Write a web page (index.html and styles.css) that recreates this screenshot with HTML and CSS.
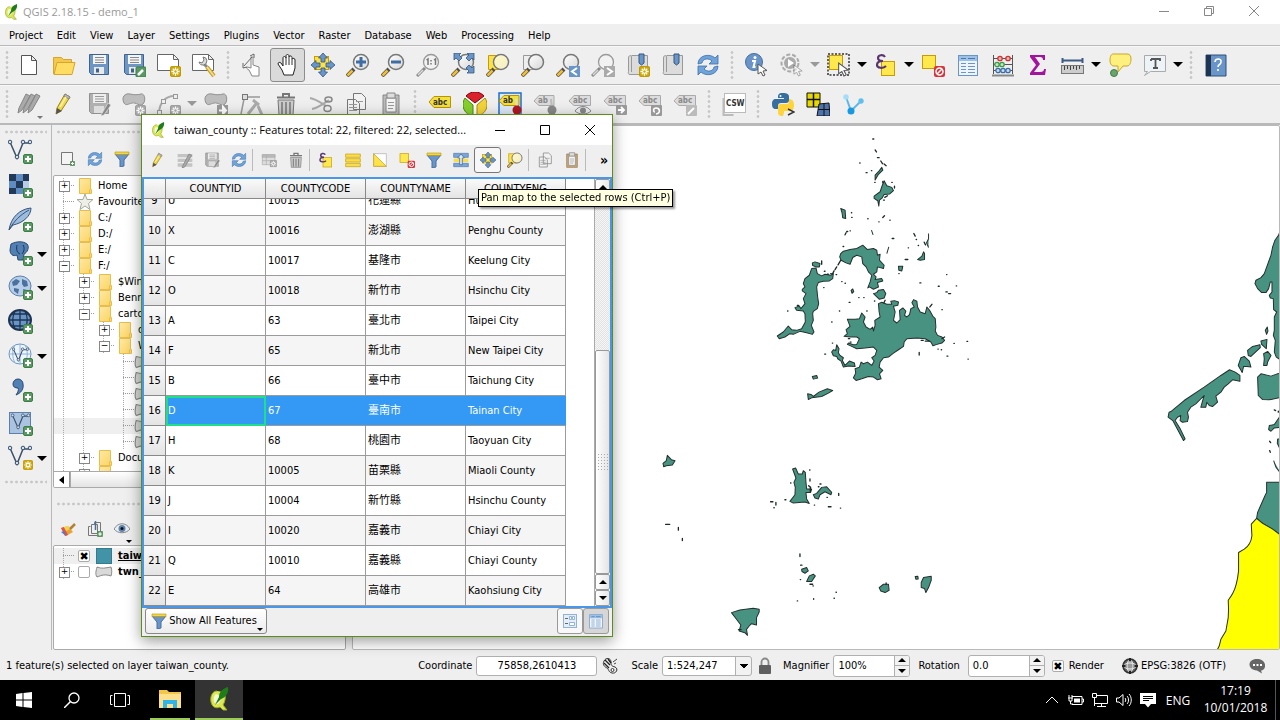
FILE: index.html
```html
<!DOCTYPE html>
<html lang="en">
<head>
<meta charset="utf-8">
<title>QGIS 2.18.15 - demo_1</title>
<link rel="stylesheet" href="styles.css">
</head>
<body>
<svg class="sprite" aria-hidden="true">
  <defs>
    <linearGradient id="gFold" x1="0" y1="0" x2="1" y2="1"><stop offset="0" stop-color="#ffe9a6"/><stop offset="1" stop-color="#fbd35e"/></linearGradient>
    <linearGradient id="gLens" x1="0" y1="0" x2="1" y2="1"><stop offset="0" stop-color="#fff"/><stop offset="1" stop-color="#d5d7d5"/></linearGradient>
  </defs>
  <symbol id="leaf" viewBox="0 0 24 24"><path d="M10 4C5 4 3 10 4 15c1 5 5 7 9 5l3 3h4l-4-5c3-5 3-11 0-13" fill="#dbe84f" stroke="#98a72e"/><path d="M9 7c-3 2-3 9 0 10s5-3 5-8" fill="#f6f9d8"/><path d="M21 0c-6 2-9 5-9 10l-4 8 6-6c5-2 8-6 7-12z" fill="#1e7d18"/></symbol>
  <symbol id="plus" viewBox="0 0 10 10"><rect x=".5" y=".5" width="9" height="9" rx="1.5" fill="#5a9a62" stroke="#3f7d48"/><path d="M5 2v6M2 5h6" stroke="#fff" stroke-width="2"/></symbol>
  <symbol id="gearY" viewBox="0 0 12 12"><rect x=".5" y=".5" width="11" height="11" rx="1.5" fill="#cfa800" stroke="#b89400"/><path d="M6 1.5v9M1.5 6h9M3 3l6 6M9 3L3 9" stroke="#fff" stroke-width="1.4"/><circle cx="6" cy="6" r="1.3" fill="#cfa800"/></symbol>
  <symbol id="gearG" viewBox="0 0 12 12"><rect x=".5" y=".5" width="11" height="11" rx="1.5" fill="#aaa" stroke="#999"/><path d="M6 1.5v9M1.5 6h9M3 3l6 6M9 3L3 9" stroke="#fff" stroke-width="1.4"/><circle cx="6" cy="6" r="1.3" fill="#aaa"/></symbol>
  <symbol id="cursor" viewBox="0 0 12 14"><path d="M1 1v10l3-2 2 4 2-1-2-4 4-.5z" fill="#fff" stroke="#555"/></symbol>
  <symbol id="new" viewBox="0 0 24 24"><path d="M4.500 2.500h10l5 5v14h-15zM14.500 2.500v5h5" fill="#fff" stroke="#555"/></symbol>
  <symbol id="open" viewBox="0 0 24 24"><path d="M1.500 21V4.500h8l2 2h8v4" fill="#f4c84c" stroke="#d7a52d"/><path d="M2 21.500l3-12h18l-3 12z" fill="#ffdc62" stroke="#d7a52d"/></symbol>
  <symbol id="save" viewBox="0 0 24 24"><path d="M2.500 1.500h19v20h-17l-2-2z" fill="#6d96c4" stroke="#3f638e"/><path d="M6 2h13v9H6z" fill="#f4f4f4"/><path d="M8 4.500h9M8 7h9M8 9.500h9" stroke="#888"/><path d="M7 14h10v7H7z" fill="#e9e9e9"/><path d="M9 15.500h3v4H9z" fill="#3f638e"/></symbol>
  <symbol id="saveas" viewBox="0 0 24 24"><use href="#save"/><rect x="14" y="14" width="10" height="10" rx="1" fill="#5a9a62" stroke="#3f7d48"/><path d="M16 22l5-5" stroke="#fff" stroke-width="2.500"/></symbol>
  <symbol id="saveg" viewBox="0 0 24 24"><path d="M2.500 1.500h19v20h-17l-2-2z" fill="#b0b0b0" stroke="#909090"/><path d="M6 2h13v9H6z" fill="#eee"/><path d="M8 4.500h9M8 7h9M8 9.500h9" stroke="#999"/><path d="M7 14h10v7H7z" fill="#ddd"/><path d="M14 23l7-12 3 2-7 10-3 1z" fill="#888" stroke="#efefef" stroke-width=".6"/></symbol>
  <symbol id="composer" viewBox="0 0 24 24"><path d="M.500 1.500h16l5 5v11h-21zM16.500 1.500v5h5" fill="#fff" stroke="#666"/><use href="#gearY" x="13" y="13" width="11" height="11"/></symbol>
  <symbol id="manager" viewBox="0 0 24 24"><path d="M.500 1.500h16l5 5v11h-21zM16.500 1.500v5h5" fill="#fff" stroke="#666"/><path d="M12 11l3 3" stroke="#888" stroke-width="3"/><path d="M7 9a4 4 0 1 0 4-5l1 3-2 3z" fill="#ddd" stroke="#777"/><path d="M15 14l7 9" stroke="#c49b22" stroke-width="4"/><path d="M15 14l7 9" stroke="#f3dc83" stroke-width="2"/></symbol>
  <symbol id="touch" viewBox="0 0 24 24"><path d="M10 4v11l-4-1c-1 1 0 2 2 3l3 6h7V14l-6-2 0-8z" fill="#fff" stroke="#888"/><path d="M3 13l8-9M9 3l4-2v4M2 10v5l4-1" fill="none" stroke="#666"/></symbol>
  <symbol id="hand" viewBox="0 0 24 24"><path d="M8 22l-2-5-4-6c0-2 2-2 3-1l2 3V5c0-2 2.500-2 3 0V3c0-2 3-2 3 0v1c0-1.500 3-1.500 3 .5V6c1-1 3-1 3 1v8l-2 7z" fill="#fff" stroke="#222"/><path d="M10 4.500V12M13 4v8M16 6v6" stroke="#333"/></symbol>
  <symbol id="pansel" viewBox="0 0 24 24"><rect x="3.500" y="3.500" width="14" height="13" fill="#fbe24a" stroke="#c79c00"/><path d="M12 0l4.500 5H14v4h-4V5H7.500zM12 24l4.500-5H14v-4h-4v4H7.500zM0 12l5-4.500V10h4v4H5v2.500zM24 12l-5-4.500V10h-4v4h4v2.500z" fill="#6a95c8" stroke="#34567e" stroke-width=".8"/></symbol>
  <symbol id="mag" viewBox="0 0 24 24"><path d="M1 23l7-7" stroke="#4d4d4d" stroke-width="4"/><path d="M1.500 22.500l5-5" stroke="#f2bd2e" stroke-width="2.500"/><circle cx="15" cy="9" r="7.500" fill="url(#gLens)" stroke="#777" stroke-width="1.500"/></symbol>
  <symbol id="magg" viewBox="0 0 24 24"><path d="M1 23l8-8" stroke="#888" stroke-width="3"/><path d="M2 22l5-5" stroke="#ddd" stroke-width="1.500"/><circle cx="15" cy="9" r="7.500" fill="#f2f2f2" stroke="#999" stroke-width="1.300"/></symbol>
  <symbol id="zin" viewBox="0 0 24 24"><use href="#mag"/><path d="M15 4v10M10 9h10" stroke="#3f6ca3" stroke-width="3"/></symbol>
  <symbol id="zout" viewBox="0 0 24 24"><use href="#mag"/><path d="M10 9h10" stroke="#3f6ca3" stroke-width="3"/></symbol>
  <symbol id="z11" viewBox="0 0 24 24"><use href="#magg"/><path d="M10.500 7l1.500-1v6M18 7l1.500-1v6M15 7v1.500M15 10v1.500" fill="none" stroke="#777" stroke-width="1.500"/></symbol>
  <symbol id="zfull" viewBox="0 0 24 24"><use href="#mag"/><path d="M3 0h7L8 2l3 3-3 3-3-3-2 2zM23 0v7l-2-2-3 3-3-3 3-3-2-2zM23 20h-7l2-2-3-3 3-3 3 3 2-2z" fill="#6a95c8" stroke="#34567e" stroke-width=".8"/></symbol>
  <symbol id="zsel" viewBox="0 0 24 24"><path d="M2.500 2.500h13v14h-13z" fill="#fbe24a" stroke="#c79c00"/><use href="#mag"/><circle cx="15" cy="9" r="6.500" fill="#fdf5b8" opacity=".75"/></symbol>
  <symbol id="zlay" viewBox="0 0 24 24"><path d="M2.500 2.500h13v14h-13z" fill="#eee" stroke="#999"/><use href="#mag"/></symbol>
  <symbol id="zlast" viewBox="0 0 24 24"><use href="#mag"/><rect x="13" y="13" width="11" height="11" fill="#6a95c8"/><path d="M21 15l-5 3.500 5 3.500" fill="none" stroke="#fff" stroke-width="2"/></symbol>
  <symbol id="znext" viewBox="0 0 24 24"><use href="#magg"/><rect x="13" y="13" width="11" height="11" fill="#aaa"/><path d="M16 15l5 3.500-5 3.500" fill="none" stroke="#fff" stroke-width="2"/></symbol>
  <symbol id="book" viewBox="0 0 24 24"><path d="M2.500 5c0-3 3-3 3-1v15M5.500 2.500h16v19H4c-2 0-2-2-1.500-3V5" fill="#dcdcdc" stroke="#999"/><path d="M13 1h5v9l-2.500 2L13 10z" fill="#6a95c8" stroke="#34567e"/></symbol>
  <symbol id="booknew" viewBox="0 0 24 24"><use href="#book"/><use href="#gearY" x="13" y="13" width="11" height="11"/></symbol>
  <symbol id="sync" viewBox="0 0 24 24"><path d="M2 11C2 2 14 0 19 5l3-3v9h-9l3-3C13 5 7 5 6 10zM22 13c0 9-12 11-17 6l-3 3v-9h9l-3 3c3 3 9 3 10-2z" fill="#6fa3da" stroke="#3c6fa8" stroke-width=".8"/></symbol>
  <symbol id="info" viewBox="0 0 24 24"><circle cx="9" cy="9" r="8.500" fill="#6a93c7" stroke="#46709f"/><circle cx="10" cy="4.500" r="1.500" fill="#fff"/><path d="M7 8h3l-1.500 6h2" fill="none" stroke="#fff" stroke-width="2"/><use href="#cursor" x="12" y="10" width="12" height="14"/></symbol>
  <symbol id="action" viewBox="0 0 24 24"><circle cx="10" cy="10" r="8.500" fill="#eee" stroke="#aaa" stroke-width="2" stroke-dasharray="4 2"/><circle cx="10" cy="10" r="6" fill="#aaa"/><path d="M8 6l6 4-6 4z" fill="#fff"/><use href="#cursor" x="13" y="11" width="11" height="13" opacity=".5"/></symbol>
  <symbol id="selrect" viewBox="0 0 24 24"><rect x="1" y="1" width="21" height="21" fill="none" stroke="#333" stroke-width="1.500" stroke-dasharray="2 1.500"/><rect x="2.500" y="2.500" width="13" height="14" fill="#fde84e" stroke="#c79c00"/><use href="#cursor" x="10" y="9" width="14" height="15"/></symbol>
  <symbol id="eps" viewBox="0 0 24 24"><rect x="7.500" y="8.500" width="13" height="14" fill="#fde84e" stroke="#c79c00"/><path d="M11 4C9 1 4 2 4 5s3 3 5 3c-3 0-6 1-6 4s6 4 9 1" fill="none" stroke="#5a3570" stroke-width="2.200"/></symbol>
  <symbol id="desel" viewBox="0 0 24 24"><rect x="1.500" y="2.500" width="13" height="13" fill="#fde84e" stroke="#c79c00"/><rect x="13" y="13" width="11" height="11" rx="2" fill="#d9333b"/><circle cx="18.500" cy="18.500" r="3.500" fill="none" stroke="#fff" stroke-width="1.500"/><path d="M16 21l5-5" stroke="#fff" stroke-width="1.500"/></symbol>
  <symbol id="attr" viewBox="0 0 24 24"><rect x="2.500" y="2.500" width="19" height="20" fill="#eef4fa" stroke="#6a95c8"/><path d="M3 3h18v5H3z" fill="#9cc0e6"/><path d="M5 5.500h5M12 5.500h7" stroke="#4b78ae"/><path d="M5 10.500h5M12 10.500h7M5 13.500h5M12 13.500h7M5 16.500h5M12 16.500h7M5 19.500h5M12 19.500h7" stroke="#6a95c8"/></symbol>
  <symbol id="abacus" viewBox="0 0 24 24"><path d="M2.500 2v19M21.500 2v19M2 5.500h20M2 11.500h20M2 17.500h20" stroke="#555"/><path d="M1 21.500h22v2H1z" fill="#888"/><g stroke-width="1.300"><g fill="#f6b5b5" stroke="#c33"><circle cx="9" cy="5.500" r="2.200"/><circle cx="17" cy="5.500" r="2.200"/></g><g fill="#c0e8c2" stroke="#3e9a4a"><circle cx="6" cy="11.500" r="2.200"/><circle cx="11" cy="11.500" r="2.200"/></g><g fill="#c5dcf3" stroke="#3f6ca3"><circle cx="7" cy="17.500" r="2.200"/><circle cx="12" cy="17.500" r="2.200"/><circle cx="17" cy="17.500" r="2.200"/></g></g></symbol>
  <symbol id="sigma" viewBox="0 0 24 24"><path d="M4 2h15v5h-2c0-2-1-3-3-3H9l5 7-6 8h6c3 0 4-1 4-3h2l-1 6H4v-2l6-8-6-8z" fill="#a3149e"/></symbol>
  <symbol id="ruler" viewBox="0 0 24 24"><path d="M1 7.500h21M1.500 5v5M21.500 5v5" stroke="#3c5a82" stroke-width="2"/><rect x=".500" y="12.500" width="22" height="8" fill="#ccc" stroke="#777"/><path d="M3.500 13v4M6.500 13v3M9.500 13v4M12.500 13v3M15.500 13v4M18.500 13v3" stroke="#444"/></symbol>
  <symbol id="tip" viewBox="0 0 24 24"><path d="M5 1h14c3 0 4 2 4 5s-1 7-4 7h-4l-5 6v-6H6c-3 0-4-3-4-6s1-6 3-6z" fill="#fdf07e" stroke="#c9a722"/><circle cx="6" cy="20" r="3.500" fill="#6aa36c" stroke="#3f7d48"/></symbol>
  <symbol id="anno" viewBox="0 0 24 24"><path d="M1.500 2.500h21v16h-15l-6 4 3-4h-3z" fill="#edf3f6" stroke="#aaa"/><path d="M8 6h9v2M12.500 6v9M10 15h5M8 6v2" fill="none" stroke="#555" stroke-width="1.800"/></symbol>
  <symbol id="help" viewBox="0 0 24 24"><path d="M2 2h20v21H2z" fill="#6a95c8" stroke="#2f4e78"/><path d="M2 2h5v21H2z" fill="#1e3450"/><path d="M11 9c0-4 7-4 6 0 0 3-3 2-3 5M14 16v2" fill="none" stroke="#fff" stroke-width="1.600"/></symbol>
  <symbol id="pencil" viewBox="0 0 24 24"><path d="M4 22l1-6L13 2l5 3-9 14z" fill="#f0d84b" stroke="#9a8420"/><path d="M13 2l5 3-1 2-5-3z" fill="#bbb" stroke="#888"/><path d="M4 22l1-6 5 3z" fill="#555"/><path d="M8 15l6-10" stroke="#fbf1a4" stroke-width="1.500"/></symbol>
  <symbol id="pencils" viewBox="0 0 24 24"><path d="M1 21l1-5L9 2l4 2-8 14zM6 21l1-5 7-14 4 2-8 14zM11 21l1-5 7-14 4 2-8 14z" fill="#aaa" stroke="#858585"/></symbol>
  <symbol id="blob" viewBox="0 0 24 24"><path d="M2 12C-1 6 3 2 8 3s7 1 11 0 5 7 2 10-7-2-11-1-6 3-8 0z" fill="#bdbdbd" stroke="#909090"/></symbol>
  <symbol id="addblob" viewBox="0 0 24 24"><use href="#blob" y="-1"/><use href="#gearG" x="13" y="13" width="11" height="11"/></symbol>
  <symbol id="moveblob" viewBox="0 0 24 24"><use href="#blob" y="-1"/><rect x="13" y="13" width="11" height="11" fill="#999"/><path d="M15 18.500h4M19 15l3 3.500-3 3.500z" fill="#fff" stroke="#fff" stroke-width="2"/></symbol>
  <symbol id="curve" viewBox="0 0 24 24"><path d="M2 20C3 10 9 4 17 4" fill="none" stroke="#aaa" stroke-width="2"/><g fill="#eee" stroke="#999"><rect x=".500" y="18.500" width="4" height="4"/><rect x="4.500" y="7.500" width="4" height="4"/><rect x="16.500" y="2.500" width="4" height="4"/></g><use href="#gearG" x="13" y="13" width="11" height="11"/></symbol>
  <symbol id="nodes" viewBox="0 0 24 24"><path d="M7 5h14M5 7L2 22" fill="none" stroke="#999" stroke-width="1.500"/><rect x="3.500" y="2.500" width="5" height="5" fill="#ddd" stroke="#777"/><path d="M9 22l8-10M14 8l6 5M19 14l4 9" stroke="#aaa" stroke-width="3"/></symbol>
  <symbol id="trash" viewBox="0 0 24 24"><path d="M4 8h16l-1 15H5z" fill="#ccc" stroke="#777"/><path d="M8 10v12M12 10v12M16 10v12" stroke="#777" stroke-width="1.500"/><path d="M3 5.500h18M9 5V2h6v3" fill="none" stroke="#777" stroke-width="2"/></symbol>
  <symbol id="cut" viewBox="0 0 24 24"><path d="M1 6c6 1 11 5 16 8M3 17c6-1 11-5 17-9" fill="none" stroke="#aaa" stroke-width="2"/><ellipse cx="19.500" cy="7.500" rx="3.500" ry="2.500" fill="none" stroke="#888" stroke-width="1.500"/><ellipse cx="18.500" cy="16.500" rx="3.500" ry="3" fill="none" stroke="#888" stroke-width="1.500"/></symbol>
  <symbol id="copy" viewBox="0 0 24 24"><path d="M9.500 1.500h8l4 4v12h-12zM3.500 7.500h8l4 4v11h-12z" fill="#f2f2f2" stroke="#777"/><path d="M5 12.500h8M5 15.500h8M5 18.500h8M12 9.500h7" stroke="#999"/></symbol>
  <symbol id="paste" viewBox="0 0 24 24"><path d="M4 3h16v20H4z" fill="#bbb" stroke="#888"/><path d="M7 6h10v14H7z" fill="#f5f5f5" stroke="#888"/><path d="M8 1h8v5H8z" fill="#ddd" stroke="#888"/><path d="M9 10.500h6M9 13.500h6M9 16.500h5" stroke="#999"/></symbol>
  <symbol id="pastec" viewBox="0 0 24 24"><path d="M4 3h16v20H4z" fill="#c8a878" stroke="#94754a"/><path d="M7 6h10v14H7z" fill="#f5f5f5" stroke="#888"/><path d="M8 1h8v5H8z" fill="#ddd" stroke="#888"/><path d="M9 10.500h6M9 13.500h6M9 16.500h5" stroke="#999"/></symbol>
  <symbol id="abc" viewBox="0 0 24 24"><path d="M1 10l5-5.500h16.500v11H6z" fill="#f3e03b" stroke="#b89400"/></symbol>
  <symbol id="abcg" viewBox="0 0 24 24"><path d="M1 9l5-5.500h16.500v10H6z" fill="#dcdcdc" stroke="#aaa"/></symbol>
  <symbol id="pie" viewBox="0 0 24 24"><circle cx="12" cy="12" r="11.500" fill="#fff"/><path d="M12 11L3 4a12 12 0 0 1 18 0z" fill="#d9242b" stroke="#801"/><path d="M10 13v11A11.500 11.500 0 0 1 2 6z" fill="#86d02c" stroke="#4c8a10"/><path d="M14 13v11A11.500 11.500 0 0 0 22 6z" fill="#f3d43a" stroke="#a88910"/></symbol>
  <symbol id="pin" viewBox="0 0 24 24"><rect x="1" y="1" width="22" height="22" fill="#dce9f7" stroke="#1d6fd1" stroke-width="1.500"/><path d="M1 9l5-5.500h15v10H6z" fill="#f3e03b" stroke="#b89400"/><path d="M18 7l1 9" stroke="#ddd" stroke-width="2"/><circle cx="19" cy="18" r="4.500" fill="#b0181e"/></symbol>
  <symbol id="ping" viewBox="0 0 24 24"><path d="M1 9l5-5.500h15v10H6z" fill="#dcdcdc" stroke="#aaa"/><path d="M18 7l1 9" stroke="#bbb" stroke-width="2"/><circle cx="19" cy="18" r="4.500" fill="#888"/></symbol>
  <symbol id="abceye" viewBox="0 0 24 24"><use href="#abcg"/><path d="M7 19c4-6 12-6 16 0-4 4-12 4-16 0z" fill="#eee" stroke="#888"/><circle cx="15" cy="18.500" r="3" fill="#888"/></symbol>
  <symbol id="abcmove" viewBox="0 0 24 24"><use href="#abcg"/><rect x="13" y="13" width="11" height="10" rx="1" fill="#999"/><path d="M15 18h6M18 15l3 3-3 3" fill="none" stroke="#fff" stroke-width="1.800"/></symbol>
  <symbol id="abcrot" viewBox="0 0 24 24"><use href="#abcg"/><rect x="13" y="13" width="11" height="11" rx="1" fill="#999"/><path d="M18 22c5-1 4-6 0-6-3 0-3 4-1 4" fill="none" stroke="#fff" stroke-width="1.600"/></symbol>
  <symbol id="abcedit" viewBox="0 0 24 24"><use href="#abcg"/><rect x="13" y="13" width="11" height="11" rx="1" fill="#bbb"/><path d="M15 22l6-6" stroke="#fff" stroke-width="2"/></symbol>
  <symbol id="csw" viewBox="0 0 24 24"><path d="M1.500 6v17h10" fill="none" stroke="#bbb" stroke-width="2"/><rect x="2.500" y="1.500" width="21" height="19" fill="#fff" stroke="#bbb"/></symbol>
  <symbol id="python" viewBox="0 0 24 24"><path d="M12 1c-5 0-5 2-5 5h6v1H5c-3 0-4 2-4 5s1 5 4 5h2v-3c0-2 1-3 3-3h5c2 0 3-1 3-3V5c0-3-2-4-6-4z" fill="#366f9f"/><path d="M12 24c-5 0-5-2-5-5v-3c0-3 1-4 3-4h6c2 0 2-1 2-5 3 0 5 2 5 6 0 5-2 6-4 6h-6v2z" fill="#ffd43b"/><circle cx="9.500" cy="4" r="1" fill="#fff"/><path d="M17 17l6 3-6 3" fill="none" stroke="#333" stroke-width="1.500"/></symbol>
  <symbol id="windows4" viewBox="0 0 24 24"><path d="M1 1h13v14H1z" fill="#e6d800" stroke="#111"/><path d="M1 7.500h13M7.500 1v14" stroke="#111" stroke-width="1.500"/><path d="M13 12l10-1 1 13H11z" fill="#4d74ad" stroke="#111"/><path d="M12 17.500h12M18 12v12" stroke="#111"/></symbol>
  <symbol id="vblue" viewBox="0 0 24 24"><path d="M5 5l5 14L20 9" fill="none" stroke="#5bb8ec" stroke-width="2"/><circle cx="5" cy="5" r="2.700" fill="#a5dcf7"/><circle cx="20" cy="9" r="2.700" fill="#5fc0ee"/><circle cx="10" cy="19" r="3.500" fill="#1699e0"/></symbol>
  <symbol id="vee" viewBox="0 0 24 24"><path d="M2 3l7 16 6-15h7" fill="none" stroke="#3b506b" stroke-width="1.500"/><g fill="#cfe0f3" stroke="#3b506b"><circle cx="2" cy="3" r="1.800"/><circle cx="9" cy="18" r="1.800"/><circle cx="15" cy="3" r="1.800"/><circle cx="22" cy="3" r="1.800"/></g></symbol>
  <symbol id="v1" viewBox="0 0 26 26"><use href="#vee" width="24" height="24"/><use href="#plus" x="15" y="15" width="10" height="10"/></symbol>
  <symbol id="v2" viewBox="0 0 26 26"><path d="M1 1h20v20H1z" fill="#5f8cc0"/><path d="M1 1h7v7H1zM15 1h6v7h-6zM8 8h7v7H8zM1 15h7v6H1z" fill="#22395a"/><path d="M15 8h6v7h-6z" fill="#b7cce6"/><use href="#plus" x="15" y="15" width="10" height="10"/></symbol>
  <symbol id="v3" viewBox="0 0 26 26"><path d="M1 23C3 10 12 2 23 1c0 8-8 15-18 17z" fill="#9dbbdc" stroke="#34567e"/><path d="M1 23C6 14 12 8 21 3" fill="none" stroke="#34567e"/><use href="#plus" x="15" y="15" width="10" height="10"/></symbol>
  <symbol id="v4" viewBox="0 0 26 26"><path d="M3 3c6-3 12-3 16 0 3 3 0 9-3 10l-1 6h-5l-1-5c-4 2-7-1-7-5z" fill="#5080b4" stroke="#2b4a70"/><path d="M9 4c-1 4 0 8 3 9M15 4c2 3 1 7-1 9" fill="none" stroke="#1e3450"/><use href="#plus" x="15" y="15" width="10" height="10"/></symbol>
  <symbol id="v5" viewBox="0 0 26 26"><ellipse cx="12" cy="11" rx="11" ry="10" fill="#b5cde8" stroke="#5b80ab"/><path d="M4 7l4-3 4 2-3 4-4 1zM14 4l5 2 1 5-4 1-2-3zM6 13l5 1-1 5-4-3zM15 14l4 1-3 4z" fill="#4b719f"/><use href="#plus" x="15" y="15" width="10" height="10"/></symbol>
  <symbol id="v6" viewBox="0 0 26 26"><ellipse cx="12" cy="11" rx="11" ry="10" fill="#6a95c8" stroke="#1e3450" stroke-width="2"/><path d="M1 11h22M3 5h18M3 17h18M12 1v20M7 2c-3 6-3 12 0 18M17 2c3 6 3 12 0 18" fill="none" stroke="#1e3450" stroke-width="1.300"/><use href="#plus" x="15" y="15" width="10" height="10"/></symbol>
  <symbol id="v7" viewBox="0 0 26 26"><ellipse cx="12" cy="11" rx="11" ry="10" fill="#eef5fc" stroke="#6a95c8"/><path d="M1 11h22M12 1v20M7 2c-3 6-3 12 0 18M17 2c3 6 3 12 0 18" fill="none" stroke="#8fb3da"/><use href="#vee" x="4" y="4" width="17" height="17"/><use href="#plus" x="15" y="15" width="10" height="10"/></symbol>
  <symbol id="v8" viewBox="0 0 26 26"><path d="M5 7a5 5 0 1 1 10 0c1 5-2 9-7 11 2-3 3-5 2-7-3 0-5-1-5-4z" fill="#5080b4" stroke="#2b4a70"/><use href="#plus" x="15" y="15" width="10" height="10"/></symbol>
  <symbol id="v9" viewBox="0 0 26 26"><rect x="1.500" y="1.500" width="21" height="21" fill="#a9c3e0" stroke="#5b80ab"/><use href="#vee" x="3" y="2" width="19" height="19"/><use href="#plus" x="15" y="15" width="10" height="10"/></symbol>
  <symbol id="v10" viewBox="0 0 26 26"><use href="#vee" width="24" height="24"/><use href="#gearY" x="15" y="15" width="10" height="10"/></symbol>
  <symbol id="addl" viewBox="0 0 16 16"><path d="M1.500 1.500h11v12h-11z" fill="#f4f4f4" stroke="#777"/><use href="#plus" x="10" y="10" width="5" height="5"/></symbol>
  <symbol id="funnel" viewBox="0 0 16 16"><path d="M1 3h14l-5 6v6l-4 1V9z" fill="#6a95c8" stroke="#46709f"/><path d="M1 1h14v2.500H1z" fill="#f0d84b" stroke="#b89400" stroke-width=".6"/></symbol>
  <symbol id="folder" viewBox="0 0 20 16"><path d="M5.500.500h11v11h1v4h-12z" fill="url(#gFold)" stroke="#e6bd4e"/><path d="M15.500 11.500v4" stroke="#e6bd4e"/></symbol>
  <symbol id="star" viewBox="0 0 20 16"><path d="M11 0l2 5.500h6l-4.500 4 1.500 6-5-3.500-5 3.500 1.500-6-4.500-4h6z" fill="#eef0e6" stroke="#a5aa98"/></symbol>
  <symbol id="poly" viewBox="0 0 18 12"><path d="M2 1c5 2 8 1 14 0 1 3 1 6 0 9-6-2-9-1-14 1-2-3-1-6 0-10z" fill="#d9d9d9" stroke="#888"/></symbol>
  <symbol id="brush" viewBox="0 0 16 16"><path d="M1 7l7-2 5 6-7 4z" fill="#e8a23a"/><path d="M1 7l3-1 4 8-3 1z" fill="#e0524a"/><path d="M1 11l3-1 2 5z" fill="#4a7fd0"/><path d="M4 6l4-1 2 3-4 2z" fill="#f2d64a"/><path d="M10 8l5-5" stroke="#b5802f" stroke-width="2.500"/></symbol>
  <symbol id="group" viewBox="0 0 16 16"><path d="M3.500 5.500H1.500v9h9M4.500 3.500h6v9h-6zM7.500 3V1.500h6v9" fill="none" stroke="#777"/><path d="M8.500 0v9" stroke="#46709f" stroke-width="1.500"/><use href="#plus" x="10" y="10" width="6" height="6"/></symbol>
  <symbol id="eye" viewBox="0 0 16 16"><path d="M0 8c4-7 12-7 16 0-4 5-12 5-16 0z" fill="#e8eef4" stroke="#888"/><circle cx="8" cy="7.500" r="3.500" fill="#5d83b0"/><circle cx="8" cy="7.500" r="1.500" fill="#111"/></symbol>
  <symbol id="multi" viewBox="0 0 24 24"><path d="M1 3h22v5H1zM1 10h22v5H1zM1 17h22v5H1z" fill="#c4c4c4"/><path d="M8 22L18 3l4 2-10 17-4 2z" fill="#aaa" stroke="#777"/></symbol>
  <symbol id="newcol" viewBox="0 0 24 24"><path d="M2 4h19v15H2z" fill="#ddd" stroke="#aaa"/><path d="M2 4h19v4H2zM2 13h19M8 4v15" stroke="#aaa" fill="#bbb"/><use href="#gearG" x="13" y="12" width="11" height="11"/></symbol>
  <symbol id="selall" viewBox="0 0 24 24"><path d="M1 3h22v5H1zM1 10h22v5H1zM1 17h22v5H1z" fill="#f9de49" stroke="#c79c00"/></symbol>
  <symbol id="invert" viewBox="0 0 24 24"><path d="M2.500 2.500h19v19h-19z" fill="#fff" stroke="#aaa"/><path d="M2.500 2.500v19h19z" fill="#fde24a" stroke="#c79c00"/></symbol>
  <symbol id="movetop" viewBox="0 0 24 24"><path d="M1 2h22v6H1z" fill="#7aa5d6" stroke="#4b78ae"/><path d="M1 10h22v5H1z" fill="#f9de49"/><path d="M1 17h22v5H1z" fill="#7aa5d6" stroke="#4b78ae"/><path d="M12 3l5 6h-3v10h-4V9H7z" fill="#dceaf8" stroke="#34567e"/></symbol>
  <symbol id="form" viewBox="0 0 16 16"><rect x="1.500" y="1.500" width="13" height="13" fill="#e5eef8" stroke="#8fb3da"/><path d="M3 5.500h3M3 10.500h3" stroke="#666"/><path d="M7.500 3.500h2v3h-2zM10.500 3.500h2v3h-2zM7.500 9.500h5v3h-5z" fill="#fff" stroke="#8fb3da"/></symbol>
  <symbol id="extent" viewBox="0 0 16 16"><path d="M2 3c2-4 7-3 7 1s1 4 4 5c4 2 1 7-3 6s-3-4-5-5S0 7 2 3z" fill="#eee" stroke="#333"/><path d="M3 2l5 5M6 1l3 4M2 5l5 5" stroke="#222" stroke-width="1.300"/><circle cx="10.500" cy="12" r="1.500" fill="#fff" stroke="#333"/><path d="M11 4l4-3M12 6l2-1" stroke="#444"/></symbol>
  <symbol id="lock" viewBox="0 0 14 18"><path d="M3.500 9V5a3.500 3.500 0 0 1 7 0v4" fill="none" stroke="#888" stroke-width="1.800"/><rect x="1" y="8" width="12" height="9" rx="1" fill="#5f5f5f"/></symbol>
  <symbol id="crs" viewBox="0 0 16 16"><circle cx="8" cy="8" r="7" fill="#666" stroke="#333" stroke-width="1.500"/><ellipse cx="8" cy="8" rx="3" ry="6" fill="#999" stroke="#eee"/><ellipse cx="8" cy="8" rx="6" ry="3" fill="none" stroke="#eee"/><path d="M8 0v3M8 13v3M0 8h3M13 8h3" stroke="#222" stroke-width="2"/></symbol>
  <symbol id="chat" viewBox="0 0 16 16"><path d="M8 1c10 0 10 11 4 11.500l1 3-5-3C-2 12-2 1 8 1z" fill="#666"/><path d="M4 7h2M7.500 7h2M11 7h2" stroke="#fff" stroke-width="2"/></symbol>
  <symbol id="win" viewBox="0 0 16 16"><path d="M0 2l6.500-1v6.500H0zM7.500 1L16 0v7.500H7.500zM0 8.500h6.500V15L0 14zM7.500 8.500H16V16l-8.500-1z" fill="#fff"/></symbol>
  <symbol id="search" viewBox="0 0 16 16"><circle cx="10" cy="6" r="5" fill="none" stroke="#fff" stroke-width="1.300"/><path d="M6.500 9.500L0 16" stroke="#fff" stroke-width="1.500"/></symbol>
  <symbol id="task" viewBox="0 0 20 16"><path d="M4.500 1.500h11v13h-11zM2.500 3.500h-2v9h2M17.500 3.500h2v9h-2" fill="none" stroke="#fff"/></symbol>
  <symbol id="explorer" viewBox="0 0 22 20"><path d="M0 1h8l2 2h12v16H0z" fill="#f3c548"/><path d="M0 5h22v14H0z" fill="#fde08c"/><path d="M4 19v-8h14v8h-4v-4H8v4z" fill="#2fb3e8"/></symbol>
</svg>

<div class="desktop">
<main class="app">
  <header class="titlebar">
    <svg class="s16" aria-hidden="true"><use href="#leaf"/></svg>
    <h1>QGIS 2.18.15 - demo_1</h1>
    <div class="winbtns">
      <button aria-label="Minimize"><svg viewBox="0 0 10 10"><path d="M0 5.500h10"/></svg></button>
      <button aria-label="Restore"><svg viewBox="0 0 10 10"><path d="M.500 2.500h7v7h-7zM2.500 2.500v-2h7v7h-2"/></svg></button>
      <button aria-label="Close"><svg viewBox="0 0 10 10"><path d="M0 0l10 10M10 0L0 10"/></svg></button>
    </div>
  </header>
  <nav class="menubar">
    <button>Project</button><button>Edit</button><button>View</button><button>Layer</button><button>Settings</button><button>Plugins</button><button>Vector</button><button>Raster</button><button>Database</button><button>Web</button><button>Processing</button><button>Help</button>
  </nav>
  <div class="toolbar">
    <span class="grip first"></span>
    <button class="tb" aria-label="New"><svg><use href="#new"/></svg></button>
    <button class="tb" aria-label="Open"><svg><use href="#open"/></svg></button>
    <button class="tb" aria-label="Save"><svg><use href="#save"/></svg></button>
    <button class="tb" aria-label="Save As"><svg><use href="#saveas"/></svg></button>
    <button class="tb" aria-label="New Print Composer"><svg><use href="#composer"/></svg></button>
    <button class="tb" aria-label="Composer Manager"><svg><use href="#manager"/></svg></button>
    <span class="grip"></span>
    <button class="tb" aria-label="Touch Zoom and Pan"><svg><use href="#touch"/></svg></button>
    <button class="tb on" aria-label="Pan Map"><svg><use href="#hand"/></svg></button>
    <button class="tb" aria-label="Pan Map to Selection"><svg><use href="#pansel"/></svg></button>
    <button class="tb" aria-label="Zoom In"><svg><use href="#zin"/></svg></button>
    <button class="tb" aria-label="Zoom Out"><svg><use href="#zout"/></svg></button>
    <button class="tb" aria-label="Zoom to Native Resolution"><svg><use href="#z11"/></svg></button>
    <button class="tb" aria-label="Zoom Full"><svg><use href="#zfull"/></svg></button>
    <button class="tb" aria-label="Zoom to Selection"><svg><use href="#zsel"/></svg></button>
    <button class="tb" aria-label="Zoom to Layer"><svg><use href="#zlay"/></svg></button>
    <button class="tb" aria-label="Zoom Last"><svg><use href="#zlast"/></svg></button>
    <button class="tb" aria-label="Zoom Next"><svg><use href="#znext"/></svg></button>
    <button class="tb" aria-label="New Bookmark"><svg><use href="#booknew"/></svg></button>
    <button class="tb" aria-label="Show Bookmarks"><svg><use href="#book"/></svg></button>
    <button class="tb" aria-label="Refresh"><svg><use href="#sync"/></svg></button>
    <span class="grip"></span>
    <button class="tb" aria-label="Identify Features"><svg><use href="#info"/></svg></button>
    <button class="tb" aria-label="Run Feature Action"><svg><use href="#action"/></svg></button>
    <button class="drop dim" aria-label="Actions menu"></button>
    <button class="tb" aria-label="Select Features"><svg><use href="#selrect"/></svg></button>
    <button class="drop" aria-label="Selection tools"></button>
    <button class="tb" aria-label="Select by Expression"><svg><use href="#eps"/></svg></button>
    <button class="drop" aria-label="Expression tools"></button>
    <button class="tb" aria-label="Deselect Features"><svg><use href="#desel"/></svg></button>
    <button class="tb" aria-label="Open Attribute Table"><svg><use href="#attr"/></svg></button>
    <button class="tb" aria-label="Field Calculator"><svg><use href="#abacus"/></svg></button>
    <button class="tb" aria-label="Statistical Summary"><svg><use href="#sigma"/></svg></button>
    <button class="tb" aria-label="Measure"><svg><use href="#ruler"/></svg></button>
    <button class="drop" aria-label="Measure tools"></button>
    <button class="tb" aria-label="Map Tips"><svg><use href="#tip"/></svg></button>
    <button class="tb" aria-label="Text Annotation"><svg><use href="#anno"/></svg></button>
    <button class="drop" aria-label="Annotation tools"></button>
    <span class="grip"></span>
    <button class="tb" aria-label="Help Contents"><svg><use href="#help"/></svg></button>
  </div>
  <div class="toolbar">
    <span class="grip first"></span>
    <button class="tb corner" aria-label="Current Edits"><svg><use href="#pencils"/></svg></button>
    <button class="tb" aria-label="Toggle Editing"><svg><use href="#pencil"/></svg></button>
    <button class="tb" aria-label="Save Layer Edits"><svg><use href="#saveg"/></svg></button>
    <button class="tb" aria-label="Add Feature"><svg><use href="#addblob"/></svg></button>
    <button class="tb" aria-label="Add Circular String"><svg><use href="#curve"/></svg></button>
    <button class="drop dim" aria-label="Circular string tools"></button>
    <button class="tb" aria-label="Move Feature"><svg><use href="#moveblob"/></svg></button>
    <button class="tb" aria-label="Node Tool"><svg><use href="#nodes"/></svg></button>
    <button class="tb" aria-label="Delete Selected"><svg><use href="#trash"/></svg></button>
    <button class="tb" aria-label="Cut Features"><svg><use href="#cut"/></svg></button>
    <button class="tb" aria-label="Copy Features"><svg><use href="#copy"/></svg></button>
    <button class="tb" aria-label="Paste Features"><svg><use href="#paste"/></svg></button>
    <span class="grip"></span>
    <button class="tb" aria-label="Layer Labeling Options"><svg><use href="#abc"/><text class="lbl" x="5" y="13">abc</text></svg></button>
    <button class="tb" aria-label="Layer Diagram Options"><svg><use href="#pie"/></svg></button>
    <button class="tb" aria-label="Highlight Pinned Labels"><svg><use href="#pin"/><text class="lbl" x="5" y="11">ab</text></svg></button>
    <button class="tb" aria-label="Pin Labels"><svg><use href="#ping"/><text class="lbl dim" x="5" y="11">ab</text></svg></button>
    <button class="tb" aria-label="Show or Hide Labels"><svg><use href="#abceye"/><text class="lbl dim" x="5" y="11">abc</text></svg></button>
    <button class="tb" aria-label="Move Label"><svg><use href="#abcmove"/><text class="lbl dim" x="5" y="11">abc</text></svg></button>
    <button class="tb" aria-label="Rotate Label"><svg><use href="#abcrot"/><text class="lbl dim" x="5" y="11">abc</text></svg></button>
    <button class="tb" aria-label="Change Label"><svg><use href="#abcedit"/><text class="lbl dim" x="5" y="11">abc</text></svg></button>
    <span class="grip"></span>
    <button class="tb" aria-label="MetaSearch"><svg><use href="#csw"/><text class="lbl" x="4" y="14">CSW</text></svg></button>
    <span class="grip"></span>
    <button class="tb" aria-label="Python Console"><svg><use href="#python"/></svg></button>
    <button class="tb" aria-label="Georeferencer"><svg><use href="#windows4"/></svg></button>
    <button class="tb" aria-label="Vector plugin"><svg><use href="#vblue"/></svg></button>
  </div>

  <div class="work">
    <aside class="side">
      <span class="hgrip"></span>
      <div class="sr"><button aria-label="Add Vector Layer"><svg><use href="#v1"/></svg></button></div>
      <div class="sr"><button aria-label="Add Raster Layer"><svg><use href="#v2"/></svg></button></div>
      <div class="sr"><button aria-label="Add SpatiaLite Layer"><svg><use href="#v3"/></svg></button></div>
      <div class="sr"><button aria-label="Add PostGIS Layer"><svg><use href="#v4"/></svg></button><button class="drop" aria-label="Database layers"></button></div>
      <div class="sr"><button aria-label="Add WMS Layer"><svg><use href="#v5"/></svg></button><button class="drop" aria-label="WMS layers"></button></div>
      <div class="sr"><button aria-label="Add WCS Layer"><svg><use href="#v6"/></svg></button></div>
      <div class="sr"><button aria-label="Add WFS Layer"><svg><use href="#v7"/></svg></button><button class="drop" aria-label="WFS layers"></button></div>
      <div class="sr"><button aria-label="Add Delimited Text Layer"><svg><use href="#v8"/></svg></button></div>
      <div class="sr"><button aria-label="Add Virtual Layer"><svg><use href="#v9"/></svg></button></div>
      <div class="sr"><button aria-label="New Shapefile Layer"><svg><use href="#v10"/></svg></button><button class="drop" aria-label="New layers"></button></div>
      <span class="hgrip"></span>
    </aside>

    <div class="docks">
      <section class="dock browser">
        <span class="hgrip"></span>
        <div class="dtools"><button aria-label="Add Selected Layers"><svg><use href="#addl"/></svg></button><button aria-label="Refresh"><svg><use href="#sync"/></svg></button><button aria-label="Filter Browser"><svg><use href="#funnel"/></svg></button></div>
        <div class="box">
          <ul class="tree">
            <li><i class="x"></i><svg><use href="#folder"/></svg>Home</li>
            <li><i class="t"></i><svg><use href="#star"/></svg>Favourites</li>
            <li><i class="x"></i><svg><use href="#folder"/></svg>C:/</li>
            <li><i class="x"></i><svg><use href="#folder"/></svg>D:/</li>
            <li><i class="x"></i><svg><use href="#folder"/></svg>E:/</li>
            <li><i class="x m"></i><svg><use href="#folder"/></svg>F:/</li>
            <li><i class="v"></i><i class="x"></i><svg><use href="#folder"/></svg>$Windows</li>
            <li><i class="v"></i><i class="x"></i><svg><use href="#folder"/></svg>Benny</li>
            <li><i class="v"></i><i class="x m"></i><svg><use href="#folder"/></svg>carto</li>
            <li><i class="v"></i><i class="v"></i><i class="x"></i><svg><use href="#folder"/></svg>data</li>
            <li><i class="v"></i><i class="v"></i><i class="x m"></i><svg><use href="#folder"/></svg>Web</li>
            <li><i class="v"></i><i class="v"></i><i></i><i class="t"></i><svg><use href="#poly"/></svg></li>
            <li><i class="v"></i><i class="v"></i><i></i><i class="t"></i><svg><use href="#poly"/></svg></li>
            <li><i class="v"></i><i class="v"></i><i></i><i class="t"></i><svg><use href="#poly"/></svg></li>
            <li><i class="v"></i><i class="v"></i><i></i><i class="t"></i><svg><use href="#poly"/></svg></li>
            <li class="hl"><i class="v"></i><i class="v"></i><i></i><i class="t"></i><svg><use href="#poly"/></svg></li>
            <li><i class="v"></i><i class="v"></i><i></i><i class="t"></i><svg><use href="#poly"/></svg></li>
            <li><i class="v"></i><i class="x"></i><svg><use href="#folder"/></svg>Documents</li>
            <li><i class="v"></i><i class="x"></i><svg><use href="#folder"/></svg></li>
          </ul>
          <div class="hscroll"><button aria-label="Scroll left"><span class="al"></span></button><span class="hthumb"></span></div>
        </div>
      </section>
      <section class="dock layers">
        <span class="hgrip"></span>
        <div class="dtools"><button aria-label="Layer Styling"><svg><use href="#brush"/></svg></button><button aria-label="Add Group"><svg><use href="#group"/></svg></button><button class="corner blk" aria-label="Manage Visibility"><svg><use href="#eye"/></svg></button></div>
        <div class="box">
          <ul class="tree bold">
            <li class="hl"><i class="t"></i><label><input type="checkbox" class="ck" checked><span class="swatch"></span><u>taiwan_county</u></label></li>
            <li><i class="x"></i><label><input type="checkbox" class="ck"><svg><use href="#poly"/></svg>twn_adm</label></li>
          </ul>
        </div>
      </section>
    </div>

    <section class="canvas" aria-label="Map canvas">
      <svg viewBox="354 126 924 522" preserveAspectRatio="xMaxYMid slice" role="img" aria-label="Map of Taiwan counties">
        <g class="land" transform="translate(740 120) scale(.3333)">
          <path d="M302 400L310 393 330 388 350 385 368 375 382 388 400 385 410 390 412 405 420 402 418 420 432 435 430 445 412 440 410 455 400 462 408 470 405 478 425 475 428 482 412 487 415 500 400 507 388 500 383 503 390 485 395 465 385 455 378 440 368 430 365 410 350 405 338 412 330 432 318 428 303 420 299 410Z"/>
          <path d="M400 520L410 517 415 510 430 508 437 520 432 533 418 537Z"/>
          <path d="M215 445L228 443 232 460 245 467 255 462 272 465 280 460 278 475 268 482 250 483 235 487 230 500 233 530 236 550 232 565 220 573 218 580 220 600 214 615 222 635 217 642 200 637 180 633 160 642 150 640 135 650 118 655 112 647 130 635 145 617 155 628 170 630 185 625 196 605 195 580 190 572 170 570 165 562 178 557 183 565 195 550 190 535 198 520 187 512 187 507 195 500 190 490 195 475 208 465Z"/>
          <path d="M217 428L225 425 240 430 238 440 228 440 218 436Z"/>
          <path d="M415 550L425 546 440 552 455 552 452 543 463 541 475 545 473 555 460 558 465 575 460 600 470 608 480 598 478 570 488 563 497 572 493 585 500 590 508 583 512 565 522 560 515 547 520 538 530 543 532 560 540 575 555 580 560 560 568 570 578 588 585 595 587 620 585 632 592 645 605 650 613 660 605 668 590 672 578 676 572 665 555 655 530 653 500 655 492 665 490 678 475 688 460 698 445 710 430 712 420 725 417 740 428 750 418 760 423 775 412 778 400 770 385 768 365 775 348 780 340 772 347 758 345 745 358 740 363 725 370 730 382 725 395 735 402 722 395 712 405 705 410 690 400 680 375 683 350 685 335 678 322 672 325 668 340 673 350 672 358 655 350 650 330 650 312 648 322 640 318 628 330 618 322 597 345 597 358 595 365 578 375 590 370 605 378 620 390 627 398 620 400 632 405 615 404 600 420 590 417 575Z"/>
          <path d="M275 695L280 688 287 690 290 673 297 685 295 697 300 705 310 712 307 720 315 735 328 722 343 728 345 738 325 737 310 740 303 722 293 715 290 708 280 706Z"/>
          <path d="M203 820L213 822 220 828 237 815 262 805 278 810 265 818 245 828 215 832 205 837ZM217 768L230 765 233 773 220 776ZM402 228L420 215 425 200 432 182 440 197 455 202 460 212 448 222 432 223 425 235 418 240 416 258 413 242 402 235ZM405 180L405 165 415 155 425 142 428 150 415 163ZM302 265L315 270 317 295 308 293 306 278ZM532 418L545 408 550 395 553 400 553 418 540 420ZM475 438L488 438 485 452 476 450ZM333 510l5-4 3 8-5 5zM565 340v16l-6 12 6 14M446 380l-6 20M394 330l5 14"/>
          <path class="dots" d="M398 57h3M405 90l4 6M412 113h5M422 123l5 8M432 132l6 5M359 129h1M378 158h3M394 152h1M404 187h1M428 184v4M455 187h1M463 198v6M434 232l8-5M430 240h3M428 292l5-5M383 296h1M334 278h1M335 292h1M449 300h1M416 305h1M318 338l-3 6M320 334h3M330 332h1M456 355h5M309 379h2M521 340l4 8M528 358h1M504 383h1M534 376h1M552 366l4 8M495 418h8M476 460h1M619 463h1M648 497h1M539 488h3M594 498h3M617 515h4M625 520h6M605 568h1M575 552l-6 8M641 669h1M680 663h2M683 716h1M593 686h1M603 688h1M620 707h3M537 696v8M543 660h6M555 662h12M605 655l8-5M253 453h2M262 462h3M272 460h2M288 463h2M251 502h1M305 484h1M315 489h1M356 532h1M371 532h1M327 546h3M275 605h1M298 572h1M380 572h1M403 542h1M143 572h1M172 555h4M254 701h3M277 668h1M325 655h4M330 665h3M302 420l-8 14M290 440l-5 8M282 452l-4 8M435 540l-4 8M245 422v10"/>
        </g>
        <g class="land" transform="translate(1140 220) scale(.3333)">
          <path d="M424 10L413 45 402 60 395 80 390 105 370 160 360 172 345 180 342 190 350 205 362 217 375 217 383 205 388 185 393 185 393 215 385 225 388 233 397 235 398 268 407 275 400 290 400 330 397 345 403 360 400 395 406 410 424 422Z"/>
          <path d="M322 405L320 390 335 378 357 373 358 382 330 408ZM362 372L360 362 378 357 376 385 371 380ZM373 330l6-10 2 12-4 10ZM368 400L380 393 390 405 380 425 378 435 368 435 370 415ZM292 435L300 412 310 408 325 422 330 440 318 438 308 438 304 456Z"/>
          <path d="M92 572L130 540 190 500 240 465 266 448 283 455 297 465 297 482 275 478 262 490 250 500 240 515 225 527 230 545 215 558 205 555 198 545 195 560 180 560 190 525 165 550 150 560 140 575 143 590 140 603 125 605 118 600 120 585 110 590 103 600 117 622 133 655 128 660 112 630 96 600 82 590 85 575Z"/>
          <path d="M350 470L360 460 390 467 424 455 424 530 385 538 365 537 352 525ZM383 627L385 615 400 612 415 590 424 565 424 620 400 622 390 632ZM410 655h14v28h-8l-7-15ZM398 720L405 740 424 765"/>
          <path d="M377 785H424V945L412 938 395 925 365 908 347 893 350 875 372 825 377 815Z"/>
          <path class="sel" d="M347 893L365 908 395 925 412 938 424 945V1300H222L235 1275 240 1255 255 1230 262 1190 263 1165 262 1138Q272 1124 276 1116 288 1095 293 1050L293 995 310 985Q330 972 333 945L331 910Z"/>
          <path class="dots" d="M386 662l3 4M386 690l2 5M400 568l4 2M412 572v3"/>
        </g>
        <g class="land" transform="translate(640 420) scale(.3333)">
          <path d="M83 104L95 117 106 120 98 133 80 135 72 138 70 128 80 120ZM458 145L467 142 475 160 487 160 490 150 496 155 498 185 500 205 515 205 512 215 498 215 500 235 508 248 495 244 460 247 450 242 465 222 466 200 462 185 468 172ZM520 222L530 218 545 200 560 198 575 215 573 222 555 213 540 222 535 235 525 232ZM275 575L300 567 340 562 358 565 358 573 350 590 350 612 335 608 328 615 320 625 323 643 315 635 298 630 303 612 290 595ZM717 500L730 490 745 490 747 508 735 515 722 510ZM843 485L850 470 873 466 873 478 865 500 857 515 853 503 843 500ZM485 445L500 440 505 450 495 457 486 452ZM500 482L508 465 520 460 526 465 515 482ZM825 467l8-1 1 8-7 1z"/>
          <path class="dots" d="M78 311h12M116 320v8M128 353v6M392 243h7M408 245v8M402 261h1M435 237h3M452 187h1M509 148h1M510 175v6M540 190h3M535 198h2M511 200v12M596 218v6M561 230h1M523 253h1M565 258h8M601 262h1M480 399v8M482 433h4M481 476h1M510 490h8M519 495h1M472 540h1M521 533v2M588 514h1M582 532h1M296 626h8M738 486v5M506 195l6 5"/>
        </g>
      </svg>
    </section>
  </div>

  <footer class="status">
    <span class="msg">1 feature(s) selected on layer taiwan_county.</span>
    <label for="coord">Coordinate</label><input id="coord" class="fld coord" value="75858,2610413">
    <button class="sb" aria-label="Toggle extents"><svg><use href="#extent"/></svg></button>
    <label for="scale">Scale</label>
    <select id="scale" class="fld scale"><option>1:524,247</option></select>
    <button class="sb lock" aria-label="Lock scale"><svg><use href="#lock"/></svg></button>
    <label for="magn">Magnifier</label>
    <span class="spin"><input id="magn" value="100%"><span class="ud"><button aria-label="Increase magnifier"><span class="au"></span></button><button aria-label="Decrease magnifier"><span class="ad"></span></button></span></span>
    <label for="rot">Rotation</label>
    <span class="spin wide"><input id="rot" value="0.0"><span class="ud"><button aria-label="Increase rotation"><span class="au"></span></button><button aria-label="Decrease rotation"><span class="ad"></span></button></span></span>
    <label class="render"><input type="checkbox" class="ck" checked>Render</label>
    <button class="crs"><svg><use href="#crs"/></svg>EPSG:3826 (OTF)</button>
    <button class="sb" aria-label="Messages"><svg><use href="#chat"/></svg></button>
  </footer>
</main>

<footer class="taskbar">
  <button aria-label="Start"><svg class="s16"><use href="#win"/></svg></button>
  <button aria-label="Search"><svg class="s16"><use href="#search"/></svg></button>
  <button aria-label="Task View"><svg class="s20"><use href="#task"/></svg></button>
  <button class="run" aria-label="File Explorer"><svg class="s22"><use href="#explorer"/></svg></button>
  <button class="act" aria-label="QGIS"><svg class="s24"><use href="#leaf"/></svg></button>
  <div class="tray">
    <button aria-label="Show hidden icons"><svg viewBox="0 0 16 16"><path d="M2 11l6-6 6 6"/></svg></button>
    <button aria-label="Battery"><svg viewBox="0 0 16 16"><path d="M4 4.500h10v8H4M14 7h1.500v3H14M0 6h5M1 3v3M4 3v3M1 6v3h3V6M2.500 9v3H5"/><path class="f" d="M6 6.500h6v4H6z"/></svg></button>
    <button aria-label="Network"><svg viewBox="0 0 16 16"><path d="M5 3.500h10.500v8H3M9.500 12v3M5 14.500h9M.500 1.500h4v4h-4zM2.500 6v8"/></svg></button>
    <button aria-label="Volume"><svg viewBox="0 0 16 16"><path d="M.500 6v4h2.500l4 3.500v-11L3 6zM9 6c1 1 1 3 0 4M11 4c2 2 2 6 0 8M13 2c3 3 3 9 0 12"/></svg></button>
    <button aria-label="Notifications"><svg viewBox="0 0 16 16"><path class="f" d="M0 1h16v11h-5l-3 3.500-3-3.500H0z"/><path class="k" d="M3 4.500h10M3 6.500h10M3 8.500h6"/></svg></button>
    <button class="lang">ENG</button>
    <button class="clock"><time>17:19</time><time>10/01/2018</time></button>
    <span class="peek"></span>
  </div>
</footer>

<section class="dialog" role="dialog" aria-labelledby="dlgt">
  <header class="dtitle">
    <svg class="s16" aria-hidden="true"><use href="#leaf"/></svg>
    <h2 id="dlgt">taiwan_county :: Features total: 22, filtered: 22, selected...</h2>
    <div class="winbtns dark">
      <button aria-label="Minimize"><svg viewBox="0 0 10 10"><path d="M0 5.500h10"/></svg></button>
      <button aria-label="Maximize"><svg viewBox="0 0 10 10"><path d="M.500 .500h9v9h-9z"/></svg></button>
      <button aria-label="Close"><svg viewBox="0 0 10 10"><path d="M0 0l10 10M10 0L0 10"/></svg></button>
    </div>
  </header>
  <div class="dbar">
    <button aria-label="Toggle editing mode"><svg><use href="#pencil"/></svg></button>
    <button aria-label="Toggle multi edit mode"><svg><use href="#multi"/></svg></button>
    <button aria-label="Save edits"><svg><use href="#saveg"/></svg></button>
    <button aria-label="Reload the table"><svg><use href="#sync"/></svg></button>
    <span class="sep"></span>
    <button aria-label="Add feature"><svg><use href="#newcol"/></svg></button>
    <button aria-label="Delete selected features"><svg><use href="#trash"/></svg></button>
    <span class="sep"></span>
    <button aria-label="Select by expression"><svg><use href="#eps"/></svg></button>
    <button aria-label="Select all"><svg><use href="#selall"/></svg></button>
    <button aria-label="Invert selection"><svg><use href="#invert"/></svg></button>
    <button aria-label="Deselect all"><svg><use href="#desel"/></svg></button>
    <button aria-label="Filter"><svg><use href="#funnel"/></svg></button>
    <button aria-label="Move selection to top"><svg><use href="#movetop"/></svg></button>
    <button class="hot" aria-label="Pan map to the selected rows"><svg><use href="#pansel"/></svg></button>
    <button aria-label="Zoom map to the selected rows"><svg><use href="#zsel"/></svg></button>
    <span class="sep"></span>
    <button aria-label="Copy selected rows"><svg><use href="#copy"/></svg></button>
    <button aria-label="Paste features"><svg><use href="#pastec"/></svg></button>
    <span class="sep"></span>
    <button class="more" aria-label="More tools">»</button>
  </div>
  <div class="frame">
    <div class="scroller">
      <table>
        <thead><tr><th class="n"></th><th>COUNTYID</th><th>COUNTYCODE</th><th>COUNTYNAME</th><th>COUNTYENG</th></tr></thead>
        <tbody>
          <tr><th>9</th><td>U</td><td>10015</td><td>花蓮縣</td><td>Hualien County</td></tr>
          <tr><th>10</th><td>X</td><td>10016</td><td>澎湖縣</td><td>Penghu County</td></tr>
          <tr><th>11</th><td>C</td><td>10017</td><td>基隆市</td><td>Keelung City</td></tr>
          <tr><th>12</th><td>O</td><td>10018</td><td>新竹市</td><td>Hsinchu City</td></tr>
          <tr><th>13</th><td>A</td><td>63</td><td>臺北市</td><td>Taipei City</td></tr>
          <tr><th>14</th><td>F</td><td>65</td><td>新北市</td><td>New Taipei City</td></tr>
          <tr><th>15</th><td>B</td><td>66</td><td>臺中市</td><td>Taichung City</td></tr>
          <tr class="picked"><th>16</th><td class="cur">D</td><td>67</td><td>臺南市</td><td>Tainan City</td></tr>
          <tr><th>17</th><td>H</td><td>68</td><td>桃園市</td><td>Taoyuan City</td></tr>
          <tr><th>18</th><td>K</td><td>10005</td><td>苗栗縣</td><td>Miaoli County</td></tr>
          <tr><th>19</th><td>J</td><td>10004</td><td>新竹縣</td><td>Hsinchu County</td></tr>
          <tr><th>20</th><td>I</td><td>10020</td><td>嘉義市</td><td>Chiayi City</td></tr>
          <tr><th>21</th><td>Q</td><td>10010</td><td>嘉義縣</td><td>Chiayi County</td></tr>
          <tr><th>22</th><td>E</td><td>64</td><td>高雄市</td><td>Kaohsiung City</td></tr>
        </tbody>
      </table>
    </div>
    <div class="vscroll">
      <button aria-label="Line up"><span class="au"></span></button>
      <span class="track"></span>
      <span class="thumb"></span>
      <button aria-label="Scroll up"><span class="au"></span></button>
      <button aria-label="Scroll down"><span class="ad"></span></button>
    </div>
  </div>
  <div class="dfoot">
    <button class="showall corner blk"><svg><use href="#funnel"/></svg>Show All Features</button>
    <button class="view" aria-label="Form view"><svg><use href="#form"/></svg></button>
    <button class="view on" aria-label="Table view"><svg><use href="#attr"/></svg></button>
  </div>
  <div class="tooltip" role="tooltip">Pan map to the selected rows (Ctrl+P)</div>
</section>
</div>
</body>
</html>
```
FILE: styles.css
```css
* { box-sizing: border-box; }
body {
  margin: 0;
  font: 11px/16px "DejaVu Sans Condensed", "Noto Sans", "Noto Sans CJK TC", sans-serif;
  color: #000;
  background: #efefef;
  overflow: hidden;
}
button, input, select { font: inherit; color: inherit; margin: 0; }
button { border: 0; padding: 0; background: none; display: flex; align-items: center; justify-content: center; white-space: nowrap; }
h1, h2 { margin: 0; font: 11px/16px "Open Sans", "Noto Sans", sans-serif; white-space: nowrap; }
svg { display: block; flex: none; }
.sprite { position: absolute; width: 0; height: 0; }
.s16 { width: 16px; height: 16px; }
.s20 { width: 20px; height: 16px; }
.s22 { width: 22px; height: 20px; }
.s24 { width: 24px; height: 24px; }
.lbl { font: bold 8px "DejaVu Sans Condensed", sans-serif; fill: #333; }
.lbl.dim { fill: #888; }

.desktop { position: relative; height: 100vh; display: flex; flex-direction: column; }
.app { flex: 1; min-height: 0; display: flex; flex-direction: column; }

.titlebar { display: flex; align-items: center; height: 24px; padding-left: 3px; background: #fff; }
.titlebar h1 { margin-left: 4px; color: #999; }
.winbtns { display: flex; margin-left: auto; }
.winbtns button { width: 45px; height: 20px; }
.titlebar .winbtns { padding: 0 4px 3px 0; }
.winbtns svg { width: 10px; height: 10px; fill: none; stroke: #888; overflow: visible; }
.winbtns.dark svg { stroke: #000; }

.menubar { display: flex; align-items: center; height: 22px; padding: 2px 0 0 2px; border-bottom: 1px solid #b9b9b9; }
.menubar button { padding: 0 7px; }
.toolbar { display: flex; align-items: center; height: 39px; padding-bottom: 2px; border-top: 1px solid #f8f8f8; border-bottom: 1px solid #b9b9b9; }
.toolbar .tb { width: 35px; height: 34px; flex: none; }
.toolbar .tb svg { width: 24px; height: 24px; }
.tb.on { background: #dadada; border: 1px solid #8c8c8c; border-radius: 3px; }
.grip { flex: none; width: 14px; height: 30px; background: radial-gradient(circle, #c8c8c8 1px, #f8f8f8 2px, transparent 2px) 4px 0 / 6px 5px repeat-y; }
.grip.first { width: 11px; }
.hgrip { display: block; flex: none; height: 6px; margin: 5px 4px; background: radial-gradient(circle, #c8c8c8 1px, #f8f8f8 2px, transparent 2px) 0 0 / 5px 6px repeat-x; }
.drop { width: 12px; height: 30px; flex: none; }
.drop::before { content: ""; border: 5px solid transparent; border-top: 5px solid #000; border-bottom: 0; }
.drop.dim::before { border-top-color: #999; }
.corner { position: relative; }
.corner::after { content: ""; position: absolute; right: 3px; bottom: 2px; border: 3px solid transparent; border-top-color: #777; border-bottom: 0; }
.corner.blk::after { border-top-color: #000; }

.work { flex: 1; min-height: 0; display: flex; border-top: 1px solid #b9b9b9; }
.side { width: 52px; flex: none; border-right: 1px solid #b9b9b9; }
.side .hgrip { margin: 4px 4px 0; }
.sr { display: flex; align-items: center; height: 34px; padding-left: 7px; }
.sr button:first-child { width: 28px; height: 34px; }
.sr svg { width: 26px; height: 26px; }
.sr .drop { margin-left: 1px; }
.docks { width: 294px; flex: none; display: flex; flex-direction: column; }
.dock { display: flex; flex-direction: column; min-height: 0; }
.browser { flex: 1; }
.layers { flex: 0 0 154px; margin-top: 8px; }
.dtools { display: flex; height: 33px; padding-left: 2px; }
.dtools button { width: 27px; height: 33px; }
.dtools svg { width: 16px; height: 16px; }
.browser .hgrip { margin: 4px 4px 7px; }
.box { flex: 1; min-height: 0; display: flex; flex-direction: column; margin-left: 1px; border: 1px solid #aaa; border-radius: 2px; background: #fff; overflow: hidden; }
.tree { flex: 1; min-height: 0; margin: 0; padding: 2px 0 0; list-style: none; overflow: hidden; }
.tree li, .tree label { display: flex; align-items: center; height: 16px; white-space: nowrap; }
.tree svg { width: 20px; height: 16px; margin-right: 4px; }
.tree i { flex: none; position: relative; width: 20px; height: 16px; }
.tree .hl { background: #efefef; }
.tree .v, .tree .t, .tree .x { background: linear-gradient(#aaa 50%, transparent 50%) 9px 0 / 1px 2px repeat-y; }
.tree .t::after, .tree .x::after { content: ""; position: absolute; left: 9px; right: 0; top: 7px; border-top: 1px dotted #999; }
.tree .x::before { content: "+"; position: absolute; z-index: 1; left: 5px; top: 3px; width: 9px; height: 9px; border: 1px solid #888; background: #fff; font: 9px/7px "DejaVu Sans", sans-serif; text-align: center; }
.tree .m::before { content: "−"; }
.bold { font-weight: bold; }
.bold label svg { margin: 0 5px; width: 18px; height: 12px; }
.swatch { width: 16px; height: 16px; margin: 0 6px; background: #4293a8; border: 1px solid #337b8e; }
.ck { appearance: none; flex: none; width: 12px; height: 12px; border: 1px solid #aaa; border-radius: 2px; background: #fff; display: grid; place-items: center; }
.ck:checked::before { content: "✖"; font: bold 11px/11px "DejaVu Sans", sans-serif; color: #000; }
.bold .ck { margin-left: 4px; }
.hscroll { display: flex; height: 16px; border-top: 1px solid #aaa; background: #eee; }
.hscroll button { width: 16px; border-right: 1px solid #999; background: #fff; }
.hthumb { flex: 1; border-left: 1px solid #aaa; background: linear-gradient(#fff, #e4e4e4); }
.al { border: 4px solid transparent; border-right: 5px solid #000; border-left: 0; }
.au { border: 4px solid transparent; border-bottom: 4px solid #000; border-top: 0; }
.ad { border: 4px solid transparent; border-top: 4px solid #000; border-bottom: 0; }

.canvas { flex: 1; min-width: 0; margin-left: 6px; border: 1px solid #b9b9b9; border-radius: 2px; background: #fff; overflow: hidden; }
.canvas svg { width: 100%; height: 100%; }
.land { fill: #489282; stroke: #23312e; stroke-width: 3; stroke-linejoin: round; }
.land .sel { fill: #ff0; }
.land .dots { fill: none; stroke: #1d2b28; stroke-width: 4; stroke-linecap: round; }

.status { display: flex; align-items: center; height: 30px; padding: 1px 10px 0 6px; white-space: nowrap; }
.msg { margin-right: auto; }
.fld { height: 20px; border: 1px solid #b0b0b0; border-radius: 3px; background: #fff; }
.coord { width: 121px; margin-left: 4px; text-align: center; }
.sb { width: 26px; height: 24px; }
.sb svg { width: 16px; height: 16px; }
.status label { margin-left: 8px; }
.scale {
  appearance: none;
  width: 90px;
  margin-left: 4px;
  padding: 0 4px;
  background:
    conic-gradient(from -45deg at 50% 100%, #000 90deg, transparent 0) 76px 7px / 10px 5px no-repeat,
    linear-gradient(90deg, #fff 72px, #b0b0b0 72px, #b0b0b0 73px, #f2f2f2 73px);
}
.lock svg { width: 14px; height: 18px; }
.status .lock + label { margin-left: 5px; }
.spin { display: flex; width: 77px; height: 22px; margin-left: 4px; border: 1px solid #b0b0b0; border-radius: 3px; background: #fff; overflow: hidden; }
.spin.wide { margin-left: 8px; }
.spin input { flex: 1; min-width: 0; border: 0; padding: 0 4px; background: none; }
.ud { display: flex; flex-direction: column; width: 15px; border-left: 1px solid #b0b0b0; background: #f2f2f2; }
.ud button { flex: 1; }
.ud button + button { border-top: 1px solid #b0b0b0; }
.status .render { display: flex; align-items: center; gap: 5px; margin-left: 7px; }
.crs { margin: 0 18px; gap: 3px; }
.crs svg { width: 16px; height: 16px; }

.taskbar { display: flex; height: 40px; flex: none; background: #000; color: #fff; font: 12px/17px "Open Sans", "Noto Sans", sans-serif; }
.taskbar > button { width: 48px; height: 40px; }
.taskbar .run { width: 40px; margin: 0 5px 0 6px; border-bottom: 2px solid #9ccb5a; }
.taskbar .act { background: #333; border-bottom: 2px solid #9ccb5a; }
.tray { display: flex; align-items: center; margin-left: auto; }
.tray button { width: 24px; height: 40px; }
.tray svg { width: 16px; height: 16px; fill: none; stroke: #fff; }
.tray .f { fill: #fff; stroke: none; }
.tray .k { stroke: #000; }
.tray .lang { width: 36px; }
.tray .clock { width: 79px; flex-direction: column; padding-bottom: 2px; }
.peek { width: 5px; height: 40px; border-left: 1px solid #555; }

.dialog { position: absolute; left: 141px; top: 114px; width: 472px; background: #efefef; border: 1px solid #5b8c1c; box-shadow: 0 4px 14px rgba(0, 0, 0, .4); }
.dtitle { display: flex; align-items: center; height: 30px; padding-left: 8px; background: #fff; }
.dtitle h2 { margin-left: 8px; }
.dbar { display: flex; align-items: center; height: 32px; padding: 0 0 2px 2px; }
.dbar button { width: 27px; height: 26px; flex: none; }
.dbar svg { width: 16px; height: 16px; }
.dbar .hot { border: 1px solid #777; border-radius: 3px; background: #f7f7f7; }
.dbar .more { flex: 1; padding-left: 8px; font-weight: bold; font-size: 14px; }
.sep { flex: none; width: 3px; height: 22px; border-left: 1px solid #bbb; }
.frame { display: flex; height: 431px; border: 2px solid #4a97ea; background: #fff; }
.scroller { flex: 1; display: flex; flex-direction: column-reverse; overflow: hidden; }
table { table-layout: fixed; width: 422px; border-collapse: separate; border-spacing: 0; flex: none; }
th, td { padding: 1px 2px 0; font-weight: normal; white-space: nowrap; overflow: hidden; border-right: 1px solid #9b9b9b; border-bottom: 1px solid #9b9b9b; }
tbody th, tbody td { height: 30px; }
td { text-align: left; }
thead th { position: sticky; top: 0; z-index: 2; height: 20px; background: linear-gradient(#fafafa, #e4e4e4); border-color: #888; }
.n { width: 22px; }
tbody th { padding: 1px 0 0; background: linear-gradient(#fafafa, #e4e4e4); border-color: #888; }
tbody tr:nth-child(even) td { background: #f5f5f5; }
tbody .picked:nth-child(even) td { background: #3399f5; color: #fff; border-right-color: #3399f5; }
tbody .picked:nth-child(even) .cur { border: 2px solid #1fe08a; padding: 0; }
.vscroll { display: flex; flex-direction: column; width: 16px; border-left: 1px solid #aaa; }
.vscroll button { height: 16px; border: 1px solid #999; border-radius: 2px; background: linear-gradient(90deg, #fff, #e8e8e8); }
.track { flex: 0 0 155px; background: repeating-conic-gradient(#e2e2e2 0 25%, #f6f6f6 0 50%) 0 0 / 2px 2px; }
.thumb { flex: 1; border: 1px solid #999; border-radius: 2px; background: linear-gradient(90deg, #fff, #e4e4e4); display: flex; align-items: center; justify-content: center; }
.thumb::before { content: ""; width: 11px; height: 18px; background: radial-gradient(circle, #aaa 1px, transparent 1px) 0 0 / 3px 3px; }
.dfoot { display: flex; height: 28px; padding: 0 3px 2px 3px; }
.showall { width: 122px; height: 26px; margin-right: auto; padding-right: 4px; gap: 2px; border: 1px solid #888; border-radius: 3px; background: linear-gradient(#fff, #ececec); }
.dfoot svg { width: 16px; height: 16px; }
.view { width: 26px; height: 26px; border: 1px solid #999; border-radius: 3px; background: #f8f8f8; }
.view.on { background: #d6d6d6; }
.tooltip { position: absolute; left: 336px; top: 74px; z-index: 3; padding: 0 2px; border: 1px solid #000; background: #ffffe1; box-shadow: 2px 2px 2px rgba(0, 0, 0, .4); white-space: nowrap; }
```
